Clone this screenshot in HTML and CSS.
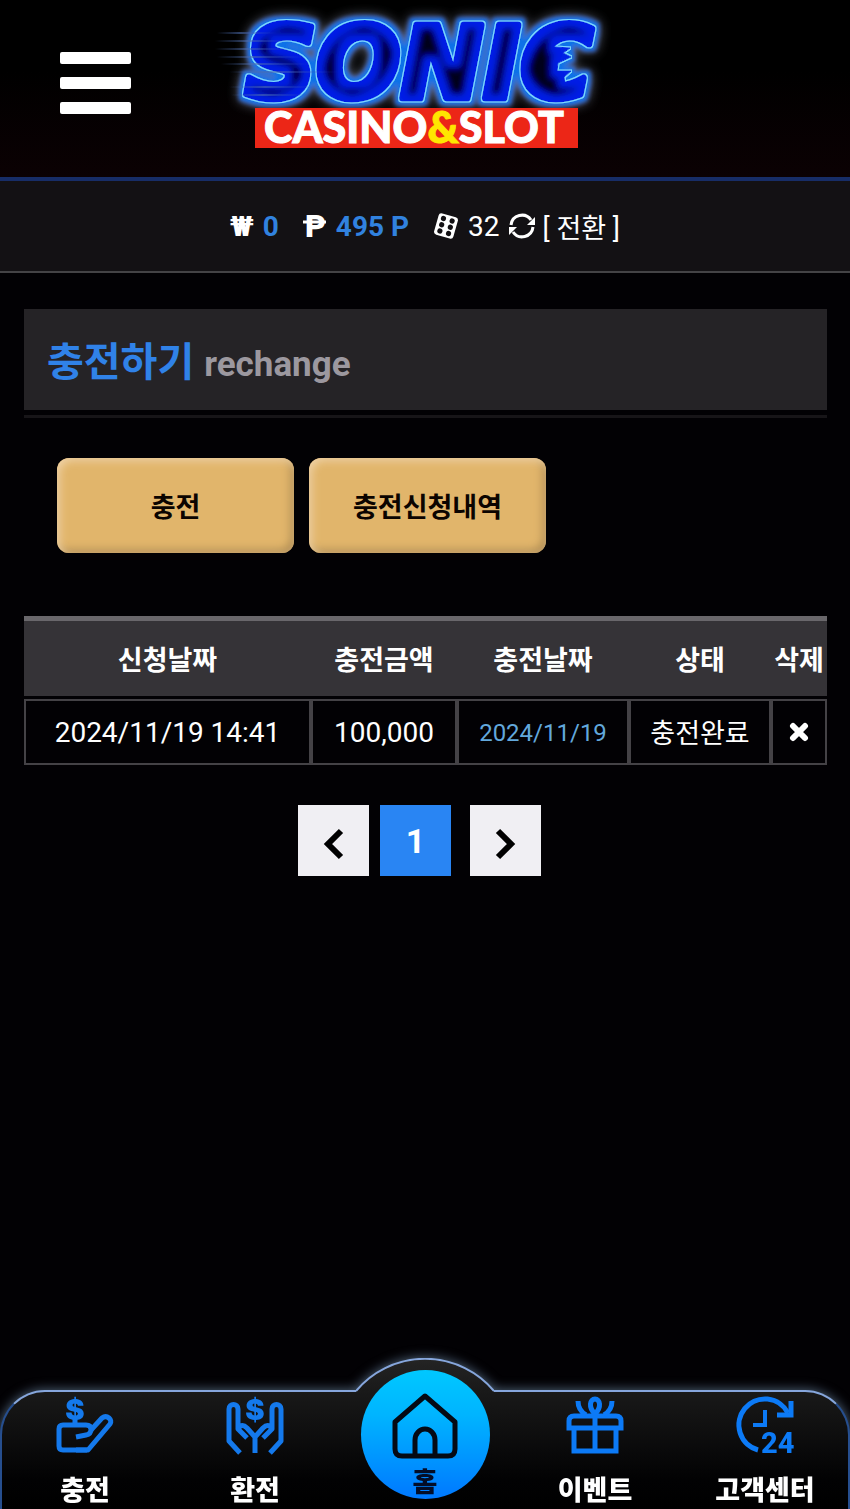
FILE: index.html
```html
<!DOCTYPE html>
<html lang="ko">
<head>
  <meta charset="UTF-8" />
  <meta name="viewport" content="width=device-width, initial-scale=1.0" />
  <title>SONIC CASINO&amp;SLOT</title>
  <link rel="stylesheet" href="styles.css">
</head>
<body>
  <header class="header">
    <button class="menu-button" type="button" aria-label="메뉴">
      <span></span><span></span><span></span>
    </button>
    <a class="logo" href="#" aria-label="SONIC CASINO&amp;SLOT">
      <svg width="420" height="160" viewBox="0 0 420 160">
        <defs>
          <linearGradient id="speed" x1="0" x2="1">
            <stop offset="0" stop-color="#4c6cae" stop-opacity="0" />
            <stop offset="0.4" stop-color="#4c6cae" stop-opacity="0.6" />
            <stop offset="1" stop-color="#2745c8" stop-opacity="0" />
          </linearGradient>
          <!-- neon: dark core, cyan outline, blue rim, grey halo -->
          <filter id="neon" filterUnits="userSpaceOnUse" x="0" y="0" width="420" height="150">
            <feMorphology in="SourceAlpha" operator="erode" radius="7" result="core" />
            <feGaussianBlur in="core" stdDeviation="3" result="coreBlur" />
            <feFlood flood-color="#00021c" />
            <feComposite in2="coreBlur" operator="in" result="dark" />
            <feMorphology in="SourceAlpha" operator="dilate" radius="1" result="outline" />
            <feFlood flood-color="#79d8ff" />
            <feComposite in2="outline" operator="in" result="line" />
            <feMorphology in="SourceAlpha" operator="dilate" radius="4" result="wide" />
            <feGaussianBlur in="wide" stdDeviation="2" result="rimBlur" />
            <feFlood flood-color="#0872e8" />
            <feComposite in2="rimBlur" operator="in" result="rim" />
            <feGaussianBlur in="wide" stdDeviation="6" result="haloBlur" />
            <feFlood flood-color="#6f7788" />
            <feComposite in2="haloBlur" operator="in" result="halo" />
            <feMerge>
              <feMergeNode in="halo" />
              <feMergeNode in="rim" />
              <feMergeNode in="line" />
              <feMergeNode in="SourceGraphic" />
              <feMergeNode in="dark" />
            </feMerge>
          </filter>
        </defs>
        <g class="sonic">
          <text x="30" y="98">SONIC</text>
          <path class="spikes" d="M326 46l29 2-7 5 8 4-13 6-1 8 14 0-7 6 1 8-28-6z" />
        </g>
        <g fill="url(#speed)">
          <rect x="2" y="32" width="60" height="2" />
          <rect x="0" y="40" width="80" height="2" />
          <rect x="0" y="48" width="80" height="2" />
          <rect x="2" y="56" width="90" height="2" />
          <rect x="6" y="63" width="90" height="2" />
          <rect x="14" y="71" width="110" height="2" />
          <rect x="14" y="86" width="90" height="2" />
          <rect x="16" y="94" width="80" height="2" />
        </g>
        <rect x="40" y="108" width="323" height="40" fill="#ec2617" />
        <text class="logo-sub" x="199" y="143" text-anchor="middle">CASINO<tspan class="amp">&amp;</tspan>SLOT</text>
      </svg>
    </a>
  </header>

  <div class="wallet">
    <span class="wallet-item">
      <span class="won">₩</span>
      <strong>0</strong>
    </span>
    <span class="wallet-item">
      <svg width="24" height="32" viewBox="0 0 24 32" aria-hidden="true">
        <text class="peso" x="2" y="27">P</text>
        <path d="M0 12h23" stroke="#fff" stroke-width="3" />
      </svg>
      <strong>495 P</strong>
    </span>
    <span class="wallet-item">
      <svg width="26" height="26" viewBox="0 0 26 26" aria-hidden="true">
        <g transform="rotate(16 13 13)">
          <rect x="3" y="2" width="20" height="22" rx="3" fill="#fff" />
          <g fill="#131114">
            <circle cx="8.5" cy="6.500" r="2.6" /><circle cx="17.5" cy="6.500" r="2.6" />
            <circle cx="8.5" cy="13" r="2.6" /><circle cx="17.5" cy="13" r="2.6" />
            <circle cx="8.5" cy="19.500" r="2.6" /><circle cx="17.5" cy="19.500" r="2.6" />
          </g>
        </g>
      </svg>
      <span>32</span>
      <button class="convert" type="button">
        <svg width="26" height="26" viewBox="0 0 26 26" aria-hidden="true">
          <g fill="none" stroke="#fff" stroke-width="3">
            <path d="M2 12a11 11 0 0 1 20-5" />
            <path d="M24 14a11 11 0 0 1-20 5" />
          </g>
          <path d="M26 4v8h-8zM0 22v-8h8z" fill="#fff" />
        </svg>
        [ 전환 ]
      </button>
    </span>
  </div>

  <main class="content">
    <h1 class="page-title">충전하기 <span>rechange</span></h1>

    <div class="tabs">
      <button class="tab" type="button">충전</button>
      <button class="tab" type="button">충전신청내역</button>
    </div>

    <table class="history">
      <colgroup>
        <col class="col-request"><col class="col-amount"><col class="col-date"><col class="col-state"><col class="col-delete">
      </colgroup>
      <thead>
        <tr>
          <th>신청날짜</th>
          <th>충전금액</th>
          <th>충전날짜</th>
          <th>상태</th>
          <th>삭제</th>
        </tr>
      </thead>
      <tbody>
        <tr>
          <td>2024/11/19 14:41</td>
          <td>100,000</td>
          <td class="done-date">2024/11/19</td>
          <td>충전완료</td>
          <td>
            <button class="delete" type="button" aria-label="삭제">
              <svg width="20" height="20" viewBox="0 0 20 20">
                <path d="M4 4l12 12M16 4L4 16" stroke="#fff" stroke-width="6" stroke-linecap="round" />
              </svg>
            </button>
          </td>
        </tr>
      </tbody>
    </table>

    <nav class="pagination" aria-label="페이지">
      <a href="#" aria-label="이전">
        <svg width="22" height="32" viewBox="0 0 22 32"><path d="M18 3L5 16l13 13" fill="none" stroke="#000" stroke-width="6" /></svg>
      </a>
      <a class="current" href="#">1</a>
      <a class="next" href="#" aria-label="다음">
        <svg width="22" height="32" viewBox="0 0 22 32"><path d="M3 3l13 13L3 29" fill="none" stroke="#000" stroke-width="6" /></svg>
      </a>
    </nav>
  </main>

  <nav class="bottom-nav">
    <div class="nav-shape">
      <div class="nav-side nav-left"></div>
      <svg class="nav-hump" width="138" height="151" viewBox="0 0 138 151">
        <defs>
          <linearGradient id="bar" x1="0" y1="0" x2="0" y2="1">
            <stop offset="0" stop-color="#242424" />
            <stop offset="0.22" stop-color="#191919" />
            <stop offset="0.8" stop-color="#020203" />
            <stop offset="1" stop-color="#000" />
          </linearGradient>
        </defs>
        <path d="M0 33A90 90 0 0 1 138 33V151H0z" fill="url(#bar)" />
        <path d="M0 33A90 90 0 0 1 138 33" fill="none" stroke="#86a6dc" stroke-width="2" />
      </svg>
      <div class="nav-side nav-right"></div>
    </div>

    <a class="nav-item" href="#">
      <svg width="58" height="58" viewBox="0 0 58 58">
        <g fill="none" stroke="#1479ec" stroke-width="5" stroke-linejoin="round">
          <path d="M31 54H7q-4 0-4-4V33q0-4 4-4h23q5 0 5 4.500t-5 5.500l-10 2" />
          <path d="M35 34L46 22c5-4 11 2 8 6L32 54H20" />
          <path d="M19 22v7" />
        </g>
        <text class="icon-dollar" x="19" y="24" text-anchor="middle">$</text>
      </svg>
      <span>충전</span>
    </a>
    <a class="nav-item" href="#">
      <svg width="58" height="58" viewBox="0 0 58 58">
        <g fill="none" stroke="#1479ec" stroke-width="5" stroke-linejoin="round">
          <path d="M14 57L3 45V13c0-6 9-6 9 0v20l9 9M12 33c3-5 6-4 9-1l8 9v16M29 41l8-9c3-3 6-4 9 1M37 42l9-9V13c0-6 9-6 9 0v32L44 57" />
        </g>
        <text class="icon-dollar" x="29" y="24" text-anchor="middle">$</text>
      </svg>
      <span>환전</span>
    </a>
    <a class="nav-item nav-home" href="#">
      <svg width="68" height="68" viewBox="0 0 68 68">
        <path d="M34 4L4 30v27q0 7 7 7h46q7 0 7-7V30zM24 64V48a10 11 0 0 1 20 0v16" fill="none" stroke="#050a14" stroke-width="5" stroke-linejoin="round" />
      </svg>
      <span>홈</span>
    </a>
    <a class="nav-item" href="#">
      <svg width="58" height="58" viewBox="0 0 58 58">
        <g fill="none" stroke="#0c7af6" stroke-width="5">
          <path d="M3 32V25q0-5 5-5h42q5 0 5 5v7zM8 32v23h42V32M29 18v37" />
          <path d="M29 18c-7-7-5-15 0-15s7 8 0 15zM12 5c0 7 3 11 8 14M46 5c0 7-3 11-8 14" />
        </g>
      </svg>
      <span>이벤트</span>
    </a>
    <a class="nav-item" href="#">
      <svg width="58" height="58" viewBox="0 0 58 58">
        <g fill="none" stroke="#0c7af6" stroke-width="5">
          <path d="M22 54A26 26 0 1 1 52 17" />
          <path d="M55 5v14H41" />
          <path d="M29 14v15H17" stroke-width="4" />
        </g>
        <text class="icon-hours" x="25" y="57">24</text>
      </svg>
      <span>고객센터</span>
    </a>
  </nav>
</body>
</html>
```
FILE: styles.css
```css
* {
  box-sizing: border-box;
}

body {
  margin: 0;
  min-height: 100vh;
  padding-bottom: 150px;
  background: #020104;
  color: #fff;
  font-family: Roboto, 'Noto Sans CJK KR', sans-serif;
  font-size: 27px;
}

button {
  font-family: inherit;
  cursor: pointer;
}

a {
  color: inherit;
  text-decoration: none;
}

/* header */
.header {
  display: grid;
  grid-template-columns: 190px 1fr 190px;
  height: 181px;
  background: linear-gradient(#000, #000 40%, #0b0103);
  border-bottom: 4px solid #172d67;
}

.menu-button {
  display: flex;
  flex-direction: column;
  align-self: start;
  justify-self: center;
  gap: 13px;
  margin-top: 40px;
  padding: 12px;
  background: none;
  border: 0;
}

.menu-button span {
  width: 71px;
  height: 12px;
  background: #fff;
  border-radius: 2px;
}

.logo {
  justify-self: center;
}

.sonic {
  fill: #0024e6;
  stroke: #0024e6;
  stroke-width: 7px;
  stroke-linejoin: round;
  filter: url(#neon);
  font-family: 'DejaVu Sans', sans-serif;
  font-size: 99px;
  font-weight: 700;
  font-style: italic;
}

.spikes {
  stroke-width: 1px;
}

.logo-sub {
  fill: #fff;
  stroke: #fff;
  stroke-width: 1px;
  font-family: Lato, sans-serif;
  font-size: 43px;
  font-weight: 900;
}

.amp {
  fill: #ffe600;
  stroke: #ffe600;
}

/* wallet */
.wallet {
  display: flex;
  justify-content: center;
  align-items: center;
  gap: 24px;
  height: 92px;
  background: #131114;
  border-bottom: 2px solid #444346;
  font-size: 28px;
}

.wallet-item {
  display: flex;
  align-items: center;
  gap: 9px;
}

.wallet strong {
  color: #3182df;
}

.won {
  font-weight: 900;
}

.peso {
  fill: #fff;
  font-size: 32px;
  font-weight: 900;
}

.convert {
  display: flex;
  align-items: center;
  gap: 8px;
  padding: 0;
  background: none;
  border: 0;
  color: #fff;
  font-size: 27px;
}

/* content */
.content {
  padding: 36px 23px 0 24px;
}

.page-title {
  position: relative;
  margin: 0;
  padding: 23px 23px 17px;
  background: #252326;
  color: #3082e8;
  font-size: 40px;
  line-height: 61px;
}

.page-title::after {
  content: '';
  position: absolute;
  left: 0;
  right: 0;
  bottom: -8px;
  height: 3px;
  background: #171518;
}

.page-title span {
  color: #9c989f;
  font-size: 35px;
  line-height: 1;
}

.tabs {
  display: flex;
  gap: 15px;
  margin: 48px 33px 63px;
}

.tab {
  width: 237px;
  height: 95px;
  padding: 0;
  background: #e1b56b;
  border: 0;
  border-radius: 12px;
  box-shadow: inset 3px 3px 8px #f0d2a5, inset -3px -3px 8px #ac8951;
  color: #0b0400;
  font-size: 27px;
  font-weight: 700;
}

/* table */
.history {
  width: 100%;
  table-layout: fixed;
  border-collapse: separate;
  border-spacing: 0;
  border-top: 5px solid #69676b;
  text-align: center;
}

.col-request { width: 287px; }
.col-amount { width: 146px; }
.col-date { width: 172px; }
.col-state { width: 142px; }
.col-delete { width: 56px; }

.history th {
  height: 78px;
  padding: 0;
  background: #353337;
  border-bottom: 3px solid #020104;
  white-space: nowrap;
}

.history td {
  height: 66px;
  padding: 0;
  border: 2px solid #444246;
  font-size: 28px;
}

.history td:nth-child(4) {
  padding-bottom: 2px;
  font-size: 27px;
}

.history .done-date {
  padding-top: 2px;
  color: #62a8dc;
  font-size: 24px;
}

.delete {
  display: inline-flex;
  padding: 0;
  background: none;
  border: 0;
}

/* pagination */
.pagination {
  display: flex;
  justify-content: center;
  gap: 11px;
  margin: 40px 12px 0 0;
}

.pagination a {
  display: flex;
  align-items: center;
  justify-content: center;
  width: 71px;
  height: 71px;
  background: #f0eff3;
  font-size: 34px;
  font-weight: 700;
}

.pagination svg {
  margin-top: 6px;
}

.pagination .current {
  background: #2985f3;
}

.pagination .next {
  margin-left: 8px;
}

/* bottom nav */
.bottom-nav {
  position: fixed;
  left: 0;
  right: 0;
  bottom: 0;
  display: grid;
  grid-template-columns: repeat(5, 1fr);
  align-items: end;
}

.nav-shape {
  position: absolute;
  inset: auto 0 0;
  z-index: -1;
  display: flex;
  align-items: flex-end;
  filter: drop-shadow(0 0 6px #52687e);
}

.nav-side {
  flex: 1;
  height: 119px;
  background: linear-gradient(#191919, #020203 75%, #000);
  border-top: 2px solid #86a6dc;
}

.nav-left {
  border-left: 2px solid #264e8e;
  border-top-left-radius: 45px;
}

.nav-right {
  border-right: 2px solid #264e8e;
  border-top-right-radius: 45px;
}

.nav-hump {
  display: block;
}

.nav-item {
  display: flex;
  flex-direction: column;
  align-items: center;
  gap: 19px;
  font-size: 27px;
  font-weight: 900;
  line-height: 36px;
}

.nav-item svg {
  overflow: visible;
}

.nav-home {
  justify-self: center;
  justify-content: flex-end;
  gap: 8px;
  width: 129px;
  height: 129px;
  margin-bottom: 10px;
  border-radius: 50%;
  background: linear-gradient(#00c8ff, #00b4ff 35%, #0078ff);
  color: #030d28;
  line-height: 31px;
}

.icon-dollar {
  fill: #1479ec;
  font-family: Inter, sans-serif;
  font-size: 29px;
  font-weight: 900;
}

.icon-hours {
  fill: #0c7af6;
  font-size: 29px;
  font-weight: 800;
}
```
